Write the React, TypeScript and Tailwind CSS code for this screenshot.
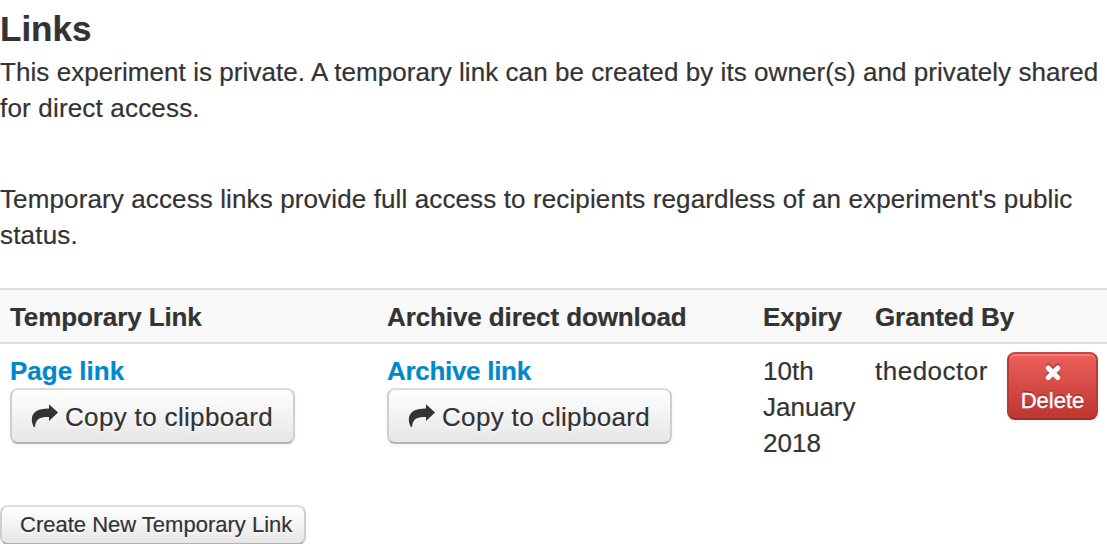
import React from "react";

const buttonBase =
  "flex items-center rounded-lg border-2 border-t-[#dcdcdc] border-x-[#cfcfcf] border-b-[#b3b3b3] bg-linear-to-b from-white to-[#e6e6e6] whitespace-nowrap text-[#333] shadow-[0_2px_4px_rgba(0,0,0,0.05)] [text-shadow:0_2px_2px_rgba(255,255,255,0.75)]";

function ShareIcon() {
  return (
    <svg className="mt-[-1px] h-[24px] w-[28px] shrink-0" viewBox="0 0 28 24" fill="#333">
      <path d="M18 0.2 L27 8.4 L18 17 V12.9 C10 12.7 4.6 14 4 22.9 H2.8 C1.8 20.8 0.8 18.8 0.8 15.8 C1 7.8 6.5 4.6 18 4.5 Z" />
    </svg>
  );
}

function CopyButton() {
  return (
    <button className={`${buttonBase} h-[56px] w-[285px] pl-[19px] text-[26px] leading-[40px]`}>
      <ShareIcon />
      <span className="ml-[6px] pt-[2px] tracking-[0.34px]">Copy to clipboard</span>
    </button>
  );
}

export default function App() {
  return (
    <main className="h-[544px] w-[1107px] overflow-hidden bg-white font-['Liberation_Sans',Arial,sans-serif] text-[26px] leading-[36px] text-[#333] [-webkit-text-stroke:0.2px]">
      <h3 className="pt-[9px] text-[35px] leading-[40px] font-bold">Links</h3>
      <p className="mt-[5px] whitespace-nowrap">
        <span className="tracking-[0.06px]">This experiment is private. A temporary link can be created by its owner(s) and privately shared</span>
        <br />
        <span className="tracking-[0.18px]">for direct access.</span>
      </p>
      <p className="mt-[55px] whitespace-nowrap">
        <span className="tracking-[0.12px]">Temporary access links provide full access to recipients regardless of an experiment's public</span>
        <br />
        <span className="tracking-[0.18px]">status.</span>
      </p>
      <table className="mt-[35px] w-[1107px] table-fixed border-collapse text-left">
        <colgroup>
          <col className="w-[377px]" />
          <col className="w-[376px]" />
          <col className="w-[112px]" />
          <col className="w-[132px]" />
          <col className="w-[110px]" />
        </colgroup>
        <thead>
          <tr className="h-[54px] border-y-2 border-[#ddd] bg-[#f9f9f9] whitespace-nowrap [&>th]:pt-[2px] [&>th]:pl-[10px] [&>th]:font-bold [&>th]:tracking-[-0.1px]">
            <th>Temporary Link</th>
            <th>Archive direct download</th>
            <th>Expiry</th>
            <th colSpan={2}>Granted By</th>
          </tr>
        </thead>
        <tbody>
          <tr className="h-[133px] align-top [&>td]:pt-[9px] [&>td]:pl-[10px]">
            <td>
              <a className="block h-[35px] font-bold text-[#0088cc]">Page link</a>
              <CopyButton />
            </td>
            <td>
              <a className="block h-[35px] font-bold tracking-[-0.3px] text-[#0088cc]">Archive link</a>
              <CopyButton />
            </td>
            <td>10th January 2018</td>
            <td className="tracking-[0.5px]">thedoctor</td>
            <td>
              <button className="mt-[-1px] flex h-[68px] w-[91px] flex-col items-center rounded-lg border-2 border-t-[#c44744] border-x-[#b93a36] border-b-[#9f2d29] bg-linear-to-b from-[#ee5f5b] to-[#bd362f] pt-[9px] text-[22px] leading-[28px] text-white shadow-[inset_0_2px_0_rgba(255,255,255,0.2),0_2px_4px_rgba(0,0,0,0.05)] [text-shadow:0_-2px_0_rgba(0,0,0,0.25)]">
                <svg className="mt-[1px] h-[18px] w-[18px] drop-shadow-[0_-2px_0_rgba(0,0,0,0.25)]" viewBox="0 0 18 18">
                  <path d="M4.2 4 L13.8 13.6 M13.8 4 L4.2 13.6" stroke="white" strokeWidth="5" strokeLinecap="round" />
                </svg>
                <span className="mt-[5px] [-webkit-text-stroke:0.3px]">Delete</span>
              </button>
            </td>
          </tr>
        </tbody>
      </table>
      <button className={`${buttonBase} mt-[29px] h-[40px] w-[306px] pl-[18px] text-[22px] leading-[36px]`}>
        Create New Temporary Link
      </button>
    </main>
  );
}
